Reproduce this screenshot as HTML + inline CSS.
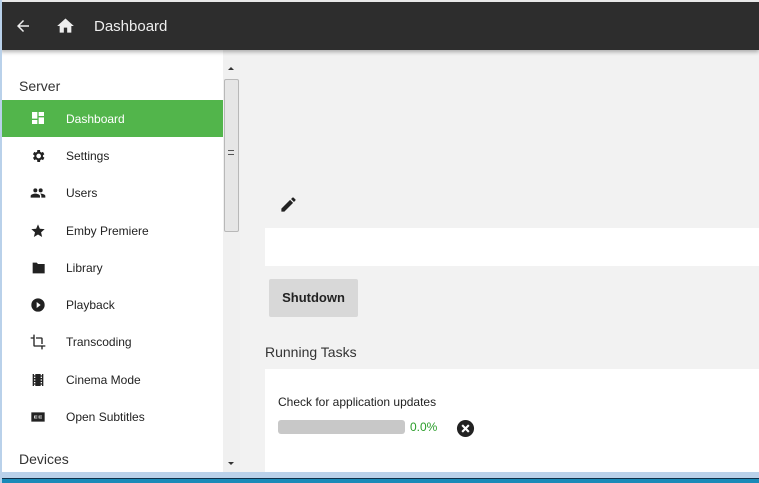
<!DOCTYPE html>
<html><head><style>
*{margin:0;padding:0;box-sizing:border-box}
body{width:759px;height:483px;overflow:hidden;position:relative;background:#f2f2f2;font-family:"Liberation Sans",sans-serif;color:#222}
.hdr{position:absolute;left:0;top:0;width:759px;height:50px;background:#2d2d2d;border-top:2px solid #e8e8e8;box-shadow:0 2px 4px rgba(0,0,0,.3);z-index:2}
.hdr .t{position:absolute;left:94px;top:15px;color:#eee;font-size:15px}
.lb{position:absolute;left:0;top:0;width:2px;height:483px;background:#b9d1ea;z-index:3}
.side{position:absolute;left:2px;top:50px;width:221px;height:422px;background:#fff}
.sb{position:absolute;left:223px;top:60px;width:17px;height:412px;background:#f0f0f0}
.thumb{position:absolute;left:1px;top:19px;width:15px;height:153px;background:#e6e6e6;border:1px solid #b8b8b8;border-radius:2px}
.hd{position:absolute;left:17px;font-size:14px;color:#333}
.it{position:absolute;left:0;width:221px;height:37px;font-size:12px;line-height:37px;padding-left:64px;color:#222}
.it svg{position:absolute;left:28px;top:10px}
.act{background:#52b54b;color:#fff}
.box{position:absolute;left:265px;background:#fff;width:494px}
.btn{position:absolute;left:269px;top:279px;width:89px;height:38px;background:#d8d8d8;border-radius:2px;font-weight:bold;font-size:13px;text-align:center;line-height:38px;color:#222}
.bot{position:absolute;left:0;top:472px;width:759px;height:11px;background:#b9d1ea}
.bot2{position:absolute;left:0;top:478px;width:759px;height:5px;background:#1a8ab8;border-top:1px solid #10304a}
</style></head><body>
<div class="lb"></div>
<div class="hdr">
<svg style="position:absolute;left:13px;top:15px" width="20" height="18" viewBox="0 0 24 24"><path d="M20 11H7.8l5.6-5.6L12 4l-8 8 8 8 1.4-1.4L7.8 13H20z" fill="#eee"/></svg>
<svg style="position:absolute;left:55px;top:14px" width="21" height="20" viewBox="0 0 24 24"><path d="M10 20v-6h4v6h5v-8h3L12 3 2 12h3v8z" fill="#eee"/></svg>
<div class="t" style="top:16px">Dashboard</div>
</div>
<div class="side">
<div class="hd" style="top:28px">Server</div>
<div class="it act" style="top:50px;line-height:38px"><svg width="16" height="16" viewBox="0 0 24 24"><path d="M3 13h8V3H3zm0 8h8v-6H3zm10 0h8V11h-8zm0-18v6h8V3z" fill="#fff"/></svg>Dashboard</div>
<div class="it" style="top:88px"><svg width="16" height="16" viewBox="0 0 24 24"><path fill="#222" d="M19.4 13a7.5 7.5 0 000-2l2.1-1.6-2-3.5-2.5 1a7 7 0 00-1.7-1L15 3h-4l-.4 2.9a7 7 0 00-1.7 1l-2.5-1-2 3.5L6.6 11a7.5 7.5 0 000 2l-2.1 1.6 2 3.5 2.5-1a7 7 0 001.7 1L11 21h4l.4-2.9a7 7 0 001.7-1l2.5 1 2-3.5zM13 15.5a3.5 3.5 0 110-7 3.5 3.5 0 010 7z"/></svg>Settings</div>
<div class="it" style="top:125px"><svg width="16" height="16" viewBox="0 0 24 24"><path fill="#222" d="M16 11a3 3 0 100-6 3 3 0 000 6zm-8 0a3 3 0 100-6 3 3 0 000 6zm0 2c-2.3 0-7 1.2-7 3.5V19h14v-2.5C15 14.2 10.3 13 8 13zm8 0h-1c1.2.8 2 2 2 3.5V19h6v-2.5c0-2.3-4.7-3.5-7-3.5z"/></svg>Users</div>
<div class="it" style="top:163px"><svg width="16" height="16" viewBox="0 0 24 24"><path fill="#222" d="M12 17.3L18.2 21l-1.6-7L22 9.2l-7.2-.6L12 2 9.2 8.6 2 9.2 7.5 14l-1.7 7z"/></svg>Emby Premiere</div>
<div class="it" style="top:200px"><svg width="16" height="16" viewBox="0 0 24 24"><path fill="#222" d="M10 4H4v16h18V6H12z"/></svg>Library</div>
<div class="it" style="top:237px"><svg width="16" height="16" viewBox="0 0 24 24"><path fill="#222" d="M12 2a10 10 0 100 20 10 10 0 000-20zm-2 14.5v-9l6 4.5z"/></svg>Playback</div>
<div class="it" style="top:274px"><svg width="16" height="16" viewBox="0 0 24 24"><path fill="#222" d="M17 15h2V7a2 2 0 00-2-2H9v2h8zM7 17V1H5v4H1v2h4v10a2 2 0 002 2h10v4h2v-4h4v-2z"/></svg>Transcoding</div>
<div class="it" style="top:312px"><svg width="16" height="16" viewBox="0 0 24 24"><path fill="#222" d="M18 3v2h-2V3H8v2H6V3H4v18h2v-2h2v2h8v-2h2v2h2V3zM8 17H6v-2h2zm0-4H6v-2h2zm0-4H6V7h2zm10 8h-2v-2h2zm0-4h-2v-2h2zm0-4h-2V7h2z"/></svg>Cinema Mode</div>
<div class="it" style="top:349px"><svg width="16" height="16" viewBox="0 0 24 24"><path fill="#222" d="M2 5h20v14H2zm9 6V10H6v4h5v-1H7v-2zm7 0v-1h-5v4h5v-1h-4v-2z"/></svg>Open Subtitles</div>
<div class="hd" style="top:401px">Devices</div>
</div>
<div class="sb"><div style="position:absolute;left:5px;top:7px;border:3px solid transparent;border-bottom:3px solid #333;border-top:0"></div><div class="thumb"></div><div style="position:absolute;left:5px;top:90px;width:6px;height:5px;border-top:1px solid #555;border-bottom:1px solid #555"></div><div style="position:absolute;left:5px;top:402px;border:3px solid transparent;border-top:3px solid #333;border-bottom:0"></div></div>
<svg style="position:absolute;left:279px;top:195px" width="19" height="19" viewBox="0 0 24 24"><path fill="#222" d="M3 17.2V21h3.8L17.8 9.9 14 6.2zM20.7 7a1 1 0 000-1.4l-2.3-2.3a1 1 0 00-1.4 0l-1.8 1.8 3.7 3.7z"/></svg>
<div class="box" style="top:228px;height:38px"></div>
<div class="btn">Shutdown</div>
<div style="position:absolute;left:265px;top:344px;font-size:14px;color:#333">Running Tasks</div>
<div class="box" style="top:369px;height:103px"></div>
<div style="position:absolute;left:278px;top:395px;font-size:12px;color:#222">Check for application updates</div>
<div style="position:absolute;left:278px;top:420px;width:127px;height:14px;background:#c8c8c8;border-radius:3px"></div>
<div style="position:absolute;left:410px;top:420px;font-size:12px;color:#2a9d2a">0.0%</div>
<svg style="position:absolute;left:456px;top:419px" width="19" height="19" viewBox="0 0 20 20"><circle cx="10" cy="10" r="9" fill="#222"/><path d="M6.5 6.5l7 7M13.5 6.5l-7 7" stroke="#fff" stroke-width="2.2"/></svg>
<div class="bot"></div><div class="bot2"></div>
</body></html>
